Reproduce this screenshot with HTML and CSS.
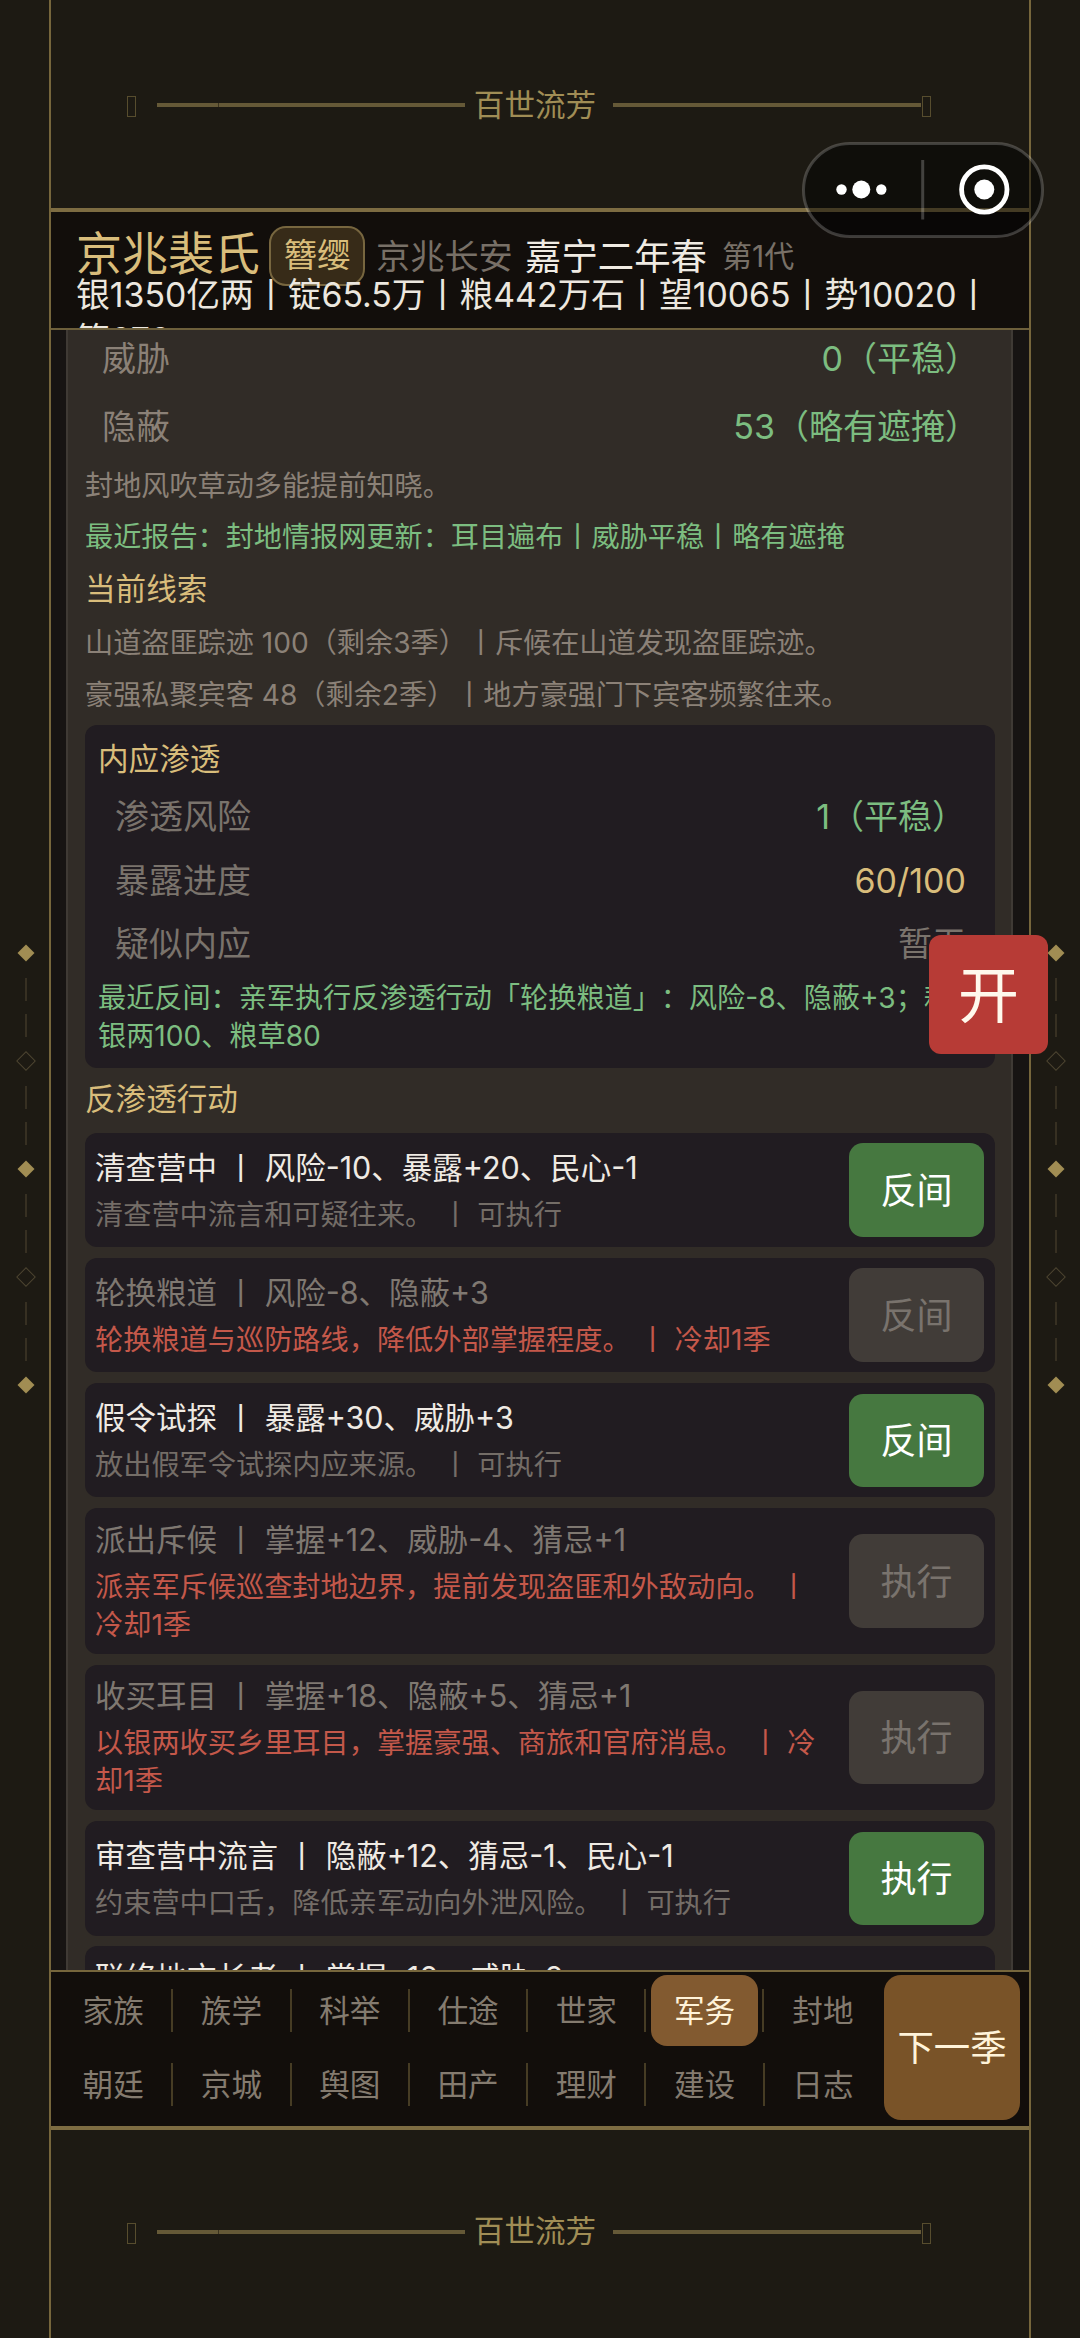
FILE: index.html
```html
<!DOCTYPE html>
<html lang="zh-CN">
<head>
<meta charset="utf-8">
<title>百世流芳</title>
<link rel="stylesheet" href="styles.css">
</head>
<body>
<div class="app">
  <div class="rail">
    <i class="dia"></i><i class="dash"></i><i class="dash"></i><i class="dia hollow"></i><i class="dash"></i><i class="dash"></i><i class="dia"></i><i class="dash"></i><i class="dash"></i><i class="dia hollow"></i><i class="dash"></i><i class="dash"></i><i class="dia"></i>
  </div>
  <div class="frame">
    <div class="banner">
      <i class="box"></i><i class="rule tick"></i><span>百世流芳</span><i class="rule"></i><i class="box end"></i>
    </div>
    <header class="head">
      <div class="who">
        <span class="clan">京兆裴氏</span><span class="tag">簪缨</span><span class="place">京兆长安</span><span class="date">嘉宁二年春</span><span class="gen">第1代</span>
      </div>
      <div class="res">银1350亿两丨锭65.5万丨粮442万石丨望10065丨势10020丨<br>策676</div>
    </header>
    <main class="main">
      <section class="panel">
        <div class="row"><span>威胁</span><span class="good">0（平稳）</span></div>
        <div class="row"><span>隐蔽</span><span class="good">53（略有遮掩）</span></div>
        <p class="note n1">封地风吹草动多能提前知晓。</p>
        <p class="note n2 good">最近报告：封地情报网更新：耳目遍布丨威胁平稳丨略有遮掩</p>
        <h3 class="title t1">当前线索</h3>
        <p class="note n3">山道盗匪踪迹 100（剩余3季）丨斥候在山道发现盗匪踪迹。</p>
        <p class="note n1">豪强私聚宾客 48（剩余2季）丨地方豪强门下宾客频繁往来。</p>
        <div class="card spy">
          <h3 class="title">内应渗透</h3>
          <div class="row"><span>渗透风险</span><span class="good">1（平稳）</span></div>
          <div class="row"><span>暴露进度</span><span class="gold">60/100</span></div>
          <div class="row last"><span>疑似内应</span><span>暂无</span></div>
          <p class="report good">最近反间：亲军执行反渗透行动「轮换粮道」：风险-8、隐蔽+3；耗<br>银两100、粮草80</p>
        </div>
        <h3 class="title t2">反渗透行动</h3>
        <div class="acts">
          <div class="card act on"><div class="txt"><b>清查营中 丨 风险-10、暴露+20、民心-1</b><p>清查营中流言和可疑往来。 丨 可执行</p></div><button>反间</button></div>
          <div class="card act off"><div class="txt"><b>轮换粮道 丨 风险-8、隐蔽+3</b><p>轮换粮道与巡防路线，降低外部掌握程度。 丨 冷却1季</p></div><button>反间</button></div>
          <div class="card act on"><div class="txt"><b>假令试探 丨 暴露+30、威胁+3</b><p>放出假军令试探内应来源。 丨 可执行</p></div><button>反间</button></div>
          <div class="card act off tall"><div class="txt"><b>派出斥候 丨 掌握+12、威胁-4、猜忌+1</b><p>派亲军斥候巡查封地边界，提前发现盗匪和外敌动向。 丨<br>冷却1季</p></div><button>执行</button></div>
          <div class="card act off tall"><div class="txt"><b>收买耳目 丨 掌握+18、隐蔽+5、猜忌+1</b><p>以银两收买乡里耳目，掌握豪强、商旅和官府消息。 丨 冷<br>却1季</p></div><button>执行</button></div>
          <div class="card act on"><div class="txt"><b>审查营中流言 丨 隐蔽+12、猜忌-1、民心-1</b><p>约束营中口舌，降低亲军动向外泄风险。 丨 可执行</p></div><button>执行</button></div>
          <div class="card act on tall"><div class="txt"><b>联络地方长老 丨 掌握+10、威胁-6</b></div></div>
        </div>
      </section>
    </main>
    <nav class="nav">
      <div class="tabs">
        <a>家族</a><a>族学</a><a>科举</a><a>仕途</a><a>世家</a><a class="active">军务</a><a>封地</a>
        <a>朝廷</a><a>京城</a><a>舆图</a><a>田产</a><a>理财</a><a>建设</a><a>日志</a>
      </div>
      <button class="next">下一季</button>
    </nav>
    <div class="banner foot">
      <i class="box"></i><i class="rule tick"></i><span>百世流芳</span><i class="rule"></i><i class="box end"></i>
    </div>
  </div>
  <div class="rail right">
    <i class="dia"></i><i class="dash"></i><i class="dash"></i><i class="dia hollow"></i><i class="dash"></i><i class="dash"></i><i class="dia"></i><i class="dash"></i><i class="dash"></i><i class="dia hollow"></i><i class="dash"></i><i class="dash"></i><i class="dia"></i>
  </div>
  <svg class="capsule" viewBox="0 0 242 96" width="242" height="96">
    <rect x="1.5" y="1.5" width="239" height="93" rx="46.5" fill="rgba(0,0,0,.45)" stroke="rgba(255,255,255,.2)" stroke-width="3"/>
    <circle cx="39.5" cy="47.5" r="5.2" fill="#fff"/><circle cx="59.3" cy="47.5" r="9" fill="#fff"/><circle cx="79.3" cy="47.5" r="5.2" fill="#fff"/>
    <path d="M120.7 18V77.5" stroke="rgba(255,255,255,.22)" stroke-width="3"/>
    <circle cx="182.3" cy="47.5" r="22.7" fill="none" stroke="#fff" stroke-width="4.8"/><circle cx="182.3" cy="47.5" r="10" fill="#fff"/>
  </svg>
  <button class="seal">开</button>
</div>
</body>
</html>
```
FILE: styles.css
```css
* { box-sizing: border-box; margin: 0; padding: 0; }
body {
  width: 1080px; height: 2338px; overflow: hidden; background: #1d1a13;
  font-family: Inter, "Noto Sans CJK SC", sans-serif; color: #8b8177;
  text-spacing-trim: space-all;
}
h3, b { font-weight: 400; }
button { border: 0; font-family: inherit; white-space: nowrap; }
.app { position: relative; display: flex; height: 2338px; }

.rail { width: 49px; display: flex; flex-direction: column; align-items: center; padding: 935px 0 0 2px; }
.rail.right { padding-left: 0; }
.rail i { height: 36px; display: flex; align-items: center; justify-content: center; width: 20px; flex: none; }
.dia::before { content: ""; width: 12px; height: 12px; background: #a18d53; transform: rotate(45deg); flex: none; }
.dia.hollow::before { background: none; border: 1.5px solid #4c4430; }
.dash::before { content: ""; width: 2px; height: 23px; background: #373022; }

.frame { width: 982px; border: solid #76663c; border-width: 0 2px; display: flex; flex-direction: column; }
.banner { height: 208px; display: flex; align-items: center; padding: 0 98px 0 76px; color: #a08d55; font-size: 30.6px; }
.banner span { flex: none; margin: 2px 17px 0 9px; line-height: 44px; white-space: nowrap; }
.box { width: 9px; height: 21px; border: 1px solid #574d2e; margin: 5px 21px 0 0; flex: none; }
.box.end { margin: 5px 0 0 1px; }
.rule { flex: 1; height: 4px; background: #655937; margin-top: 2px; }
.tick { background: linear-gradient(90deg, #655937 61px, #3a321f 61px, #3a321f 62px, #655937 62px); }
.foot { height: 202px; }
.foot span { margin-top: 0; }

.head { height: 122px; border-top: 4px solid #7d6c42; border-bottom: 2px solid #6d5f3b; background: #120e0b; padding: 0 25px; overflow: hidden; }
.who { display: flex; align-items: center; height: 58px; margin-top: 13px; white-space: nowrap; }
.clan { font-size: 46px; line-height: 58px; color: #d9bd7b; width: 193px; margin-top: -2px; }
.tag { width: 96px; height: 60px; line-height: 54px; margin-top: 4px; text-align: center; border: 2px solid #77663f; border-radius: 17px; background: #372b18; color: #d9bd7b; font-size: 33.5px; }
.place { margin-left: 11px; font-size: 34.2px; color: #787067; width: 149px; }
.date { font-size: 36.4px; color: #f0ebe3; width: 197px; }
.gen { font-size: 30px; color: #787067; }
.res { margin-top: -11px; font-size: 33.8px; line-height: 45px; color: #ece7df; position: relative; white-space: nowrap; }

.main { height: 1640px; overflow: hidden; background: #171413; padding: 0 16px 0 15px; }
.panel { background: #312c27; border: solid #3f3a35; border-width: 0 2px; padding: 0 16px 0 17px; height: 1660px; overflow: hidden; }
.row { display: flex; justify-content: space-between; height: 68px; line-height: 69px; font-size: 34px; padding: 0 16px 0 17px; white-space: nowrap; }
.panel > .row:first-child { margin-top: -6px; }
.good { color: #7cbd80; }
.gold { color: #d9bd7b; }
.note, .report { font-size: 28.15px; white-space: nowrap; }
.n1 { line-height: 52px; height: 51px; }
.n2 { line-height: 53px; height: 52px; }
.n3 { line-height: 54px; height: 53px; }
.title { font-size: 30.6px; color: #d9bd7b; line-height: 51px; }
.t1 { line-height: 51px; height: 53px; }
.t2 { line-height: 62px; height: 65px; }
.card { background: #211c21; border-radius: 12px; }
.spy { margin-top: 5px; height: 343px; padding: 8px 13px; color: #7a736c; }
.spy .row { height: 64px; line-height: 65px; }
.spy .row.last { height: 62px; line-height: 63px; }
.report { line-height: 38px; margin-top: 5px; }

.acts { display: flex; flex-direction: column; gap: 10.8px; }
.act { display: flex; align-items: center; justify-content: space-between; height: 114.3px; flex: none; padding: 0 11px 0 10px; }
.tall { height: 145.7px; }
.txt { white-space: nowrap; margin-top: -4px; }
.txt b { display: block; font-size: 30.5px; line-height: 50px; }
.txt p { font-size: 28.2px; line-height: 38px; margin-top: 3px; color: #746d67; }
.on b { color: #efeae3; }
.off b { color: #7f7871; }
.off p { color: #c4584a; }
.tall .txt:only-child { margin-bottom: 79px; }
.act button { width: 135px; height: 93.5px; border-radius: 14px; padding-bottom: 5px; font-size: 36px; background: #467840; color: #fff; }
.off button { background: #413c38; color: #79736d; }

.nav { height: 160px; border-top: 2px solid #76663c; border-bottom: 4px solid #7d6c42; background: #120e0b; display: flex; padding: 3px 9px 6px 3px; justify-content: space-between; }
.tabs { display: grid; grid-template-columns: repeat(7, 118.3px); grid-template-rows: 71px 71px; row-gap: 3px; width: 828px; }
.tabs a { position: relative; display: flex; align-items: center; justify-content: center; padding-bottom: 4px; font-size: 30.6px; color: #847b6f; }
.tabs a:not(:nth-child(7n))::after { content: ""; position: absolute; right: -1px; top: 14px; width: 2px; height: 43px; background: #463c24; }
.tabs a.active { color: #fff3d9; background: #825a30; border-radius: 16px; margin: 0 5.5px; }
.tabs a.active::after { right: -6px; }
.next { width: 136px; height: 145px; border-radius: 17px; padding-bottom: 5px; background: #795328; color: #fff3d9; font-size: 36.4px; }

.capsule { position: absolute; left: 802px; top: 142px; }
.seal { position: absolute; left: 929px; top: 935px; width: 119px; height: 119px; border-radius: 12px; padding-bottom: 7px; background: #b73b36; color: #fff8ec; font-size: 61px; }
```
